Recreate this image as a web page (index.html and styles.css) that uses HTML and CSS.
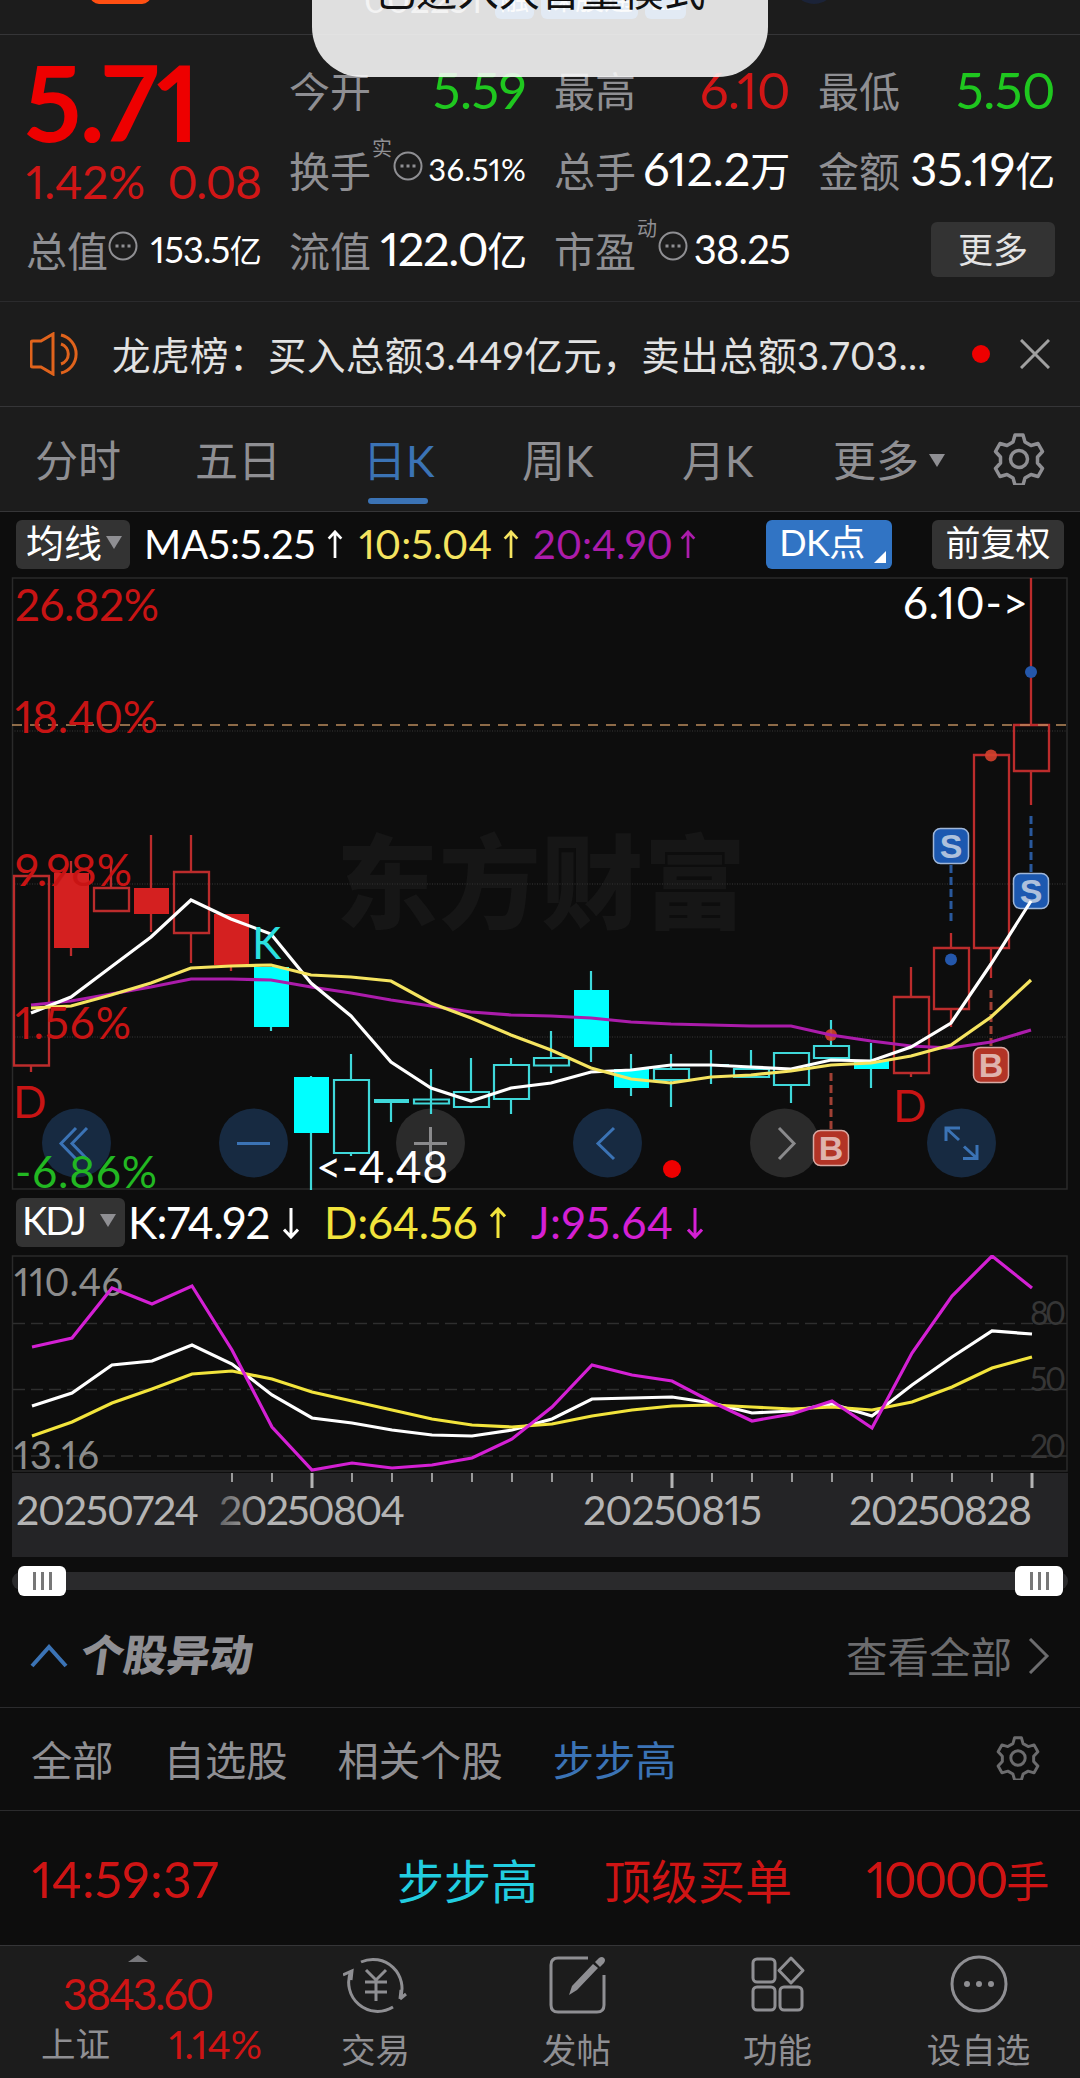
FILE: index.html
```
<!DOCTYPE html>
<html lang="zh-CN">
<head>
  <meta charset="utf-8">
  <title>步步高 002251</title>
  <link rel="stylesheet" href="styles.css">
</head>
<body>
  <svg class="symbols" width="0" height="0">
    <symbol id="gear" viewBox="0 0 52 52">
      <path d="M22 2h8l2 7 6 3.500 7-2 4.500 8-5 5.500v6l5 5.500-4.500 8-7-2-6 3.500-2 7h-8l-2-7-6-3.500-7 2-4.500-8 5-5.500v-6l-5-5.500 4.500-8 7 2 6-3.500z" stroke-linejoin="round"/>
      <circle cx="26" cy="26" r="8.500"/>
    </symbol>
    <symbol id="more-dots" viewBox="0 0 30 30">
      <circle cx="15" cy="15" r="13.500"/>
      <path d="M7.500 15h3M13.500 15h3M19.500 15h3" stroke-width="3"/>
    </symbol>
    <symbol id="up" viewBox="0 0 16 32">
      <path d="M8 31V2M1 9.500L8 2l7 7.500"/>
    </symbol>
    <symbol id="down" viewBox="0 0 16 32">
      <path d="M8 1v29M1 22.500L8 30l7-7.500"/>
    </symbol>
  </svg>

  <header class="topbar">
    <span class="topbar-logo"></span>
    <div class="stock-code">
      <span class="code">002251</span>
      <span class="tag">融</span>
      <span class="tag">深股通</span>
      <span class="tag">L2</span>
    </div>
    <span class="topbar-dot"></span>
  </header>
  <div class="toast">已进入大音量模式</div>

  <section class="quote">
    <div class="price-box">
      <div class="price">5.71</div>
      <div class="change"><span>1.42%</span><span>0.08</span></div>
    </div>
    <div class="cell"><label>今开</label><b class="green">5.59</b></div>
    <div class="cell"><label>最高</label><b class="red">6.10</b></div>
    <div class="cell"><label>最低</label><b class="green">5.50</b></div>
    <div class="cell"><label>换手<sup>实</sup></label><svg class="dots"><use href="#more-dots"/></svg><b class="xs">36.51%</b></div>
    <div class="cell"><label>总手</label><b class="md">612.2<i>万</i></b></div>
    <div class="cell"><label>金额</label><b class="md">35.19<i>亿</i></b></div>
    <div class="cell"><label>总值</label><svg class="dots"><use href="#more-dots"/></svg><b class="sm">153.5<i>亿</i></b></div>
    <div class="cell"><label>流值</label><b class="md cap">122.0<i>亿</i></b></div>
    <div class="cell"><label>市盈<sup>动</sup></label><svg class="dots"><use href="#more-dots"/></svg><b class="pe">38.25</b></div>
    <div class="cell"><button class="btn btn-more">更多</button></div>
  </section>

  <section class="news">
    <svg class="speaker" viewBox="0 0 52 44">
      <path d="M3 9h8L23 2v40L11 35H3q-2 0-2-2V11q0-2 2-2z"/>
      <path d="M31 3a19.500 19.500 0 0 1 0 38M31 12a10.500 10.500 0 0 1 0 20"/>
    </svg>
    <p>龙虎榜：买入总额3.449亿元，卖出总额3.703...</p>
    <span class="red-dot"></span>
    <svg class="close" viewBox="0 0 30 30"><path d="M1 1l28 28M29 1L1 29"/></svg>
  </section>

  <nav class="tabs">
    <a>分时</a>
    <a>五日</a>
    <a class="active">日K</a>
    <a>周K</a>
    <a>月K</a>
    <a class="tab-more">更多<i class="tri"></i></a>
    <svg class="gear"><use href="#gear"/></svg>
  </nav>

  <div class="ma-bar">
    <button class="btn btn-ma">均线<i class="tri"></i></button>
    <span class="ma5">MA5:5.25</span><svg class="arrow white"><use href="#up"/></svg>
    <span class="ma10">10:5.04</span><svg class="arrow ma10"><use href="#up"/></svg>
    <span class="ma20">20:4.90</span><svg class="arrow ma20"><use href="#up"/></svg>
    <button class="btn btn-dk">DK点</button>
    <button class="btn btn-fq">前复权</button>
  </div>

  <svg class="kline" viewBox="0 577 1080 613">
    <text class="watermark" x="336" y="921" textLength="410">东方财富</text>
    <path class="frame" d="M12.500 578H1067V1189H12.500z"/>
    <path class="grid" d="M12 731H1067M12 884H1067M12 1037H1067"/>

    <!-- 控制按钮 -->
    <g class="ctrl blue">
      <circle cx="76.500" cy="1143" r="34.500"/>
      <circle cx="253.500" cy="1143" r="34.500"/>
      <circle cx="607.500" cy="1143" r="34.500"/>
      <circle cx="961.500" cy="1143" r="34.500"/>
      <path d="M76 1128L61 1143.500L76 1159M87 1128L72 1143.500L87 1159M237 1143.500H270M614 1128L598 1143.500L614 1159"/>
      <path d="M946 1141V1128H960M947 1129L959 1140M963 1158.500H977V1145M976 1157.500L964 1146.500"/>
    </g>
    <g class="ctrl gray">
      <circle cx="430.500" cy="1143" r="34.500"/>
      <circle cx="784.500" cy="1143" r="34.500"/>
      <path d="M414 1143.500H447M430.500 1127V1160M779 1128L794 1143.500L779 1159"/>
    </g>

    <!-- 阳线 -->
    <path class="rise" d="M14 876H49V1065.500H14zM31 1065V1072
      M94 888H129V911H94zM111 865V888
      M174 872H209V933H174zM191 835V872M191 933V963
      M894 997H929V1073H894zM911 967V997M911 1073V1077
      M934 948H969V1009H934zM951 933V948M951 1009V1027
      M974 755H1009V948H974zM991 948V978
      M1014 725H1049V771H1014zM1031 578V725M1031 771V805
      M71 861V956M151 835V932M231 914V971"/>
    <path class="rise-fill" d="M54 873H89V948H54zM134 888H169V914H134zM214 914H249V965H214z"/>

    <!-- 阴线 -->
    <path class="fall" d="M334 1080H369V1153H334zM351 1054V1080M351 1153V1156
      M374 1100H409M374 1102H409M391 1102V1122
      M414 1099.500H449V1103.500H414zM431 1069V1114
      M454 1092H489V1107H454zM471 1058V1092
      M494 1065H529V1099H494zM511 1058V1065M511 1099V1114
      M534 1058H569V1065.500H534zM551 1031V1058M551 1065V1073
      M654 1069H689V1080H654zM671 1054V1069M671 1080V1107
      M694 1065H729M711 1050V1084
      M734 1069H769V1077H734zM751 1050V1069
      M774 1053H809V1085H774zM791 1085V1103
      M814 1046H849V1058H814zM831 1020V1046
      M271 1027V1031M311 1076V1190M591 971V1062M631 1054V1096M871 1043V1088"/>
    <path class="fall-fill" d="M254 967H289V1027H254zM294 1077H329V1133H294zM574 990H609V1047H574zM614 1069H649V1088H614zM854 1061H889V1069H854z"/>

    <path class="now-line" d="M12 725H1067"/>

    <!-- 买卖点 -->
    <g class="sell">
      <path d="M951 865V922M1031 816V873"/>
      <circle cx="1031" cy="672" r="6"/>
      <circle cx="951" cy="959.500" r="6"/>
      <rect x="933.500" y="828.500" width="35" height="35" rx="7"/>
      <text x="951" y="858">S</text>
      <rect x="1013.500" y="873.500" width="35" height="35" rx="7"/>
      <text x="1031" y="903">S</text>
    </g>
    <g class="buy">
      <path d="M991 990V1047M831 1073V1130"/>
      <circle cx="991" cy="755.500" r="6"/>
      <circle cx="831" cy="1035" r="6"/>
      <rect x="973.500" y="1047.500" width="35" height="35" rx="7"/>
      <text x="991" y="1077">B</text>
      <rect x="813.500" y="1130.500" width="35" height="35" rx="7"/>
      <text x="831" y="1160">B</text>
    </g>
    <circle class="alert" cx="672" cy="1169" r="9"/>

    <!-- 均线 MA20 MA10 MA5 -->
    <polyline class="line ma20" points="31,1005 71,1001 111,994 151,987 191,979 231,979 271,980 311,987 351,993 391,1000 431,1006 471,1012 511,1015 551,1016 591,1018 631,1022 671,1024 711,1025 751,1026 791,1026 831,1035 871,1041 911,1046 951,1048 991,1042 1031,1030"/>
    <polyline class="line ma5" points="31,1013 71,997 111,967 151,937 191,900 231,919 271,934 311,983 351,1016 391,1062 431,1088 471,1101 511,1088 551,1083 591,1072 631,1070 671,1065 711,1065 751,1067 791,1069 831,1060 871,1061 911,1047 951,1023 991,964 1031,901"/>
    <polyline class="line ma10" points="31,1008 71,1006 111,995 151,983 191,968 231,966 271,965 311,975 351,977 391,981 431,1003 471,1018 511,1035 551,1050 591,1068 631,1079 671,1083 711,1077 751,1075 791,1071 831,1065 871,1063 911,1056 951,1045 991,1017 1031,980"/>

    <g class="pct">
      <text x="15" y="621" textLength="144">26.82%</text>
      <text x="15" y="733" textLength="143">18.40%</text>
      <text x="15" y="886" textLength="117">9.98%</text>
      <text x="15" y="1039" textLength="116">1.56%</text>
      <text class="neg" x="15" y="1188" textLength="142">-6.86%</text>
      <text x="13" y="1118">D</text>
      <text x="893" y="1122">D</text>
      <text class="k" x="252" y="959">K</text>
      <text class="extreme" x="903" y="619" textLength="125">6.10-&gt;</text>
      <text class="extreme" x="316" y="1183" textLength="132">&lt;-4.48</text>
    </g>
  </svg>

  <div class="kdj-bar">
    <button class="btn btn-kdj">KDJ<i class="tri"></i></button>
    <span class="kdj-k">K:74.92</span><svg class="arrow white"><use href="#down"/></svg>
    <span class="kdj-d">D:64.56</span><svg class="arrow kdj-d"><use href="#up"/></svg>
    <span class="kdj-j">J:95.64</span><svg class="arrow kdj-j"><use href="#down"/></svg>
  </div>

  <svg class="kdj" viewBox="0 1255 1080 302">
    <rect class="axis" x="12" y="1473" width="1056" height="84"/>
    <path class="frame" d="M12.500 1256H1067V1471H12.500z"/>
    <path class="kdj-grid" d="M13 1323.500H1067M13 1389.500H1067M13 1456H1067"/>
    <g class="kdj-scale">
      <text x="14" y="1296" textLength="109">110.46</text>
      <text x="14" y="1469" textLength="85">13.16</text>
      <g class="levels">
        <text x="1030" y="1325" textLength="36">80</text>
        <text x="1030" y="1391" textLength="36">50</text>
        <text x="1030" y="1458" textLength="36">20</text>
      </g>
    </g>
    <polyline class="line kdj-k" points="32,1406 72,1393 112,1365 152,1361 192,1345 232,1364 272,1395 312,1418 352,1423 392,1430 432,1435 472,1436 512,1430 552,1419 592,1399 632,1398 672,1397 712,1403 752,1413 792,1411 832,1404 872,1416 912,1385 952,1357 992,1331 1032,1334"/>
    <polyline class="line kdj-d" points="32,1436 72,1422 112,1403 152,1389 192,1374 232,1371 272,1379 312,1392 352,1401 392,1410 432,1419 472,1425 512,1427 552,1424 592,1416 632,1410 672,1406 712,1405 752,1407 792,1409 832,1407 872,1410 912,1402 952,1387 992,1368 1032,1357"/>
    <polyline class="line kdj-j" points="32,1347 72,1338 112,1288 152,1304 192,1286 232,1350 272,1427 312,1470 352,1463 392,1468 432,1465 472,1458 512,1439 552,1407 592,1365 632,1375 672,1381 712,1402 752,1421 792,1414 832,1401 872,1428 912,1353 952,1296 992,1256 1032,1288"/>
    <path class="tick" d="M232 1473v9M272 1473v9M352 1473v9M392 1473v9M432 1473v9M472 1473v9M512 1473v9M552 1473v9M592 1473v9M632 1473v9M712 1473v9M752 1473v9M792 1473v9M832 1473v9M872 1473v9M912 1473v9M952 1473v9M992 1473v9"/>
    <path class="tick major" d="M312 1473v15M672 1473v15M1032 1473v15"/>
    <defs>
      <linearGradient id="fade" gradientUnits="userSpaceOnUse" x1="215" y1="0" x2="260" y2="0">
        <stop offset="0" stop-color="#5c5c5e"/>
        <stop offset="1" stop-color="#b4b4b4"/>
      </linearGradient>
    </defs>
    <g class="dates">
      <text x="16" y="1525" textLength="183">20250724</text>
      <text x="219" y="1525" textLength="186" fill="url(#fade)">20250804</text>
      <text x="583" y="1525" textLength="179">20250815</text>
      <text x="849" y="1525" textLength="183">20250828</text>
    </g>
  </svg>

  <div class="slider">
    <span class="thumb"><i></i><i></i><i></i></span>
    <span class="thumb"><i></i><i></i><i></i></span>
  </div>

  <section class="section-head">
    <svg class="chevron" viewBox="0 0 38 24"><path d="M2 22L19 3l17 19"/></svg>
    <h2>个股异动</h2>
    <a>查看全部</a>
    <svg class="chevron-r" viewBox="0 0 22 36"><path d="M2 1l17 17L2 35"/></svg>
  </section>

  <nav class="filters">
    <a>全部</a>
    <a>自选股</a>
    <a>相关个股</a>
    <a class="active">步步高</a>
    <svg class="gear"><use href="#gear"/></svg>
  </nav>

  <div class="trade">
    <span class="time">14:59:37</span>
    <span class="name">步步高</span>
    <span class="type">顶级买单</span>
    <span class="vol">10000<i>手</i></span>
  </div>

  <footer class="bottom-nav">
    <div class="index">
      <i class="tri-up"></i>
      <div class="index-val">3843.60</div>
      <div class="index-row"><span>上证</span><span class="index-pct">1.14%</span></div>
    </div>
    <a>
      <svg viewBox="0 0 66 62"><path d="M18 9A29 29 0 0 1 57 46M57 46l6-5M57 46l1-9M50 54A29 29 0 0 1 8 18M0 22l9-4-1 9"/><path d="M23 17l10 10 10-10M22 29h22M22 39h22M33 27v21"/></svg>
      交易
    </a>
    <a>
      <svg viewBox="0 0 66 62"><path d="M44 5H14q-7 0-7 7v40q0 7 7 7h39q7 0 7-7V22"/><path class="solid" d="M25 42l3-9L49 11l5 4L33 37zM51 9l4-4q3-2 5 0t0 5l-4 4z"/></svg>
      发帖
    </a>
    <a>
      <svg viewBox="0 0 66 62"><rect x="8" y="6" width="22" height="23" rx="4"/><rect x="8" y="34" width="22" height="23" rx="4"/><rect x="35" y="34" width="22" height="23" rx="4"/><path d="M46 5l12 12.500L46 30 34 17.500z" stroke-linejoin="round"/></svg>
      功能
    </a>
    <a>
      <svg viewBox="0 0 66 62"><circle cx="33" cy="31" r="27"/><circle class="solid" cx="21" cy="31" r="3"/><circle class="solid" cx="33" cy="31" r="3"/><circle class="solid" cx="45" cy="31" r="3"/></svg>
      设自选
    </a>
  </footer>
</body>
</html>
```
FILE: styles.css
```
* {
  margin: 0;
  padding: 0;
  box-sizing: border-box;
}

body {
  width: 1080px;
  height: 2078px;
  overflow: hidden;
  background: #0d0d0d;
  color: #8f8f93;
  font-family: Lato, "Noto Sans CJK SC", sans-serif;
  font-variant-numeric: proportional-nums;
}

i, b {
  font-style: normal;
  font-weight: 400;
}

svg {
  display: block;
  flex: none;
  fill: none;
  stroke: currentColor;
  stroke-width: 3;
}

svg text {
  stroke: none;
}

.symbols {
  position: absolute;
}

/* 顶部 */
.topbar {
  height: 35px;
  display: flex;
  align-items: flex-start;
  background: #1c1c1c;
  border-bottom: 1px solid #353537;
  overflow: hidden;
}

.topbar-logo {
  width: 61px;
  height: 20px;
  margin: -16px 0 0 90px;
  border-radius: 9px;
  background: #ff4f12;
}

.stock-code {
  display: flex;
  gap: 7px;
  margin: -21px 0 0 213px;
  font-size: 35px;
  line-height: 40px;
}

.code {
  width: 124px;
  color: #bbb;
}

.tag {
  padding: 0 5px;
  border-radius: 6px;
  background: #3174c4;
  color: #fff;
  font-size: 29px;
}

.topbar-dot {
  width: 44px;
  height: 44px;
  margin: -40px 0 0 106px;
  border-radius: 50%;
  background: #1b2338;
}

.toast {
  position: absolute;
  top: -60px;
  left: 312px;
  z-index: 10;
  width: 456px;
  height: 137px;
  border-radius: 50px;
  background: rgba(251, 251, 251, 0.88);
  color: #111;
  font-size: 41.300px;
  line-height: 60px;
  padding-top: 20px;
  text-align: center;
}

/* 行情 */
.quote {
  display: grid;
  grid-template-columns: 235px 237px 236px 237px;
  grid-template-rows: repeat(3, 80px);
  column-gap: 28px;
  height: 267px;
  padding: 14px 24px 0 26px;
  background: #1c1c1c;
  border-bottom: 1px solid #2b2b2d;
}

.price-box {
  grid-row: span 2;
  color: #ee0000;
}

.price {
  height: 103px;
  font-size: 105px;
  font-weight: 700;
  line-height: 104px;
  letter-spacing: -2px;
  text-indent: -2px;
}

.change {
  display: flex;
  justify-content: space-between;
  color: #d11616;
  font-size: 46px;
  line-height: 60px;
}

.change span:last-child {
  letter-spacing: -1px;
}

.cell {
  display: flex;
  align-items: center;
  white-space: nowrap;
}

.cell label {
  position: relative;
  flex: none;
  font-size: 41px;
}

.cell sup {
  position: absolute;
  top: -3px;
  left: 83px;
  font-size: 20px;
  line-height: 24px;
}

.cell b {
  margin-left: auto;
  color: #fff;
  font-size: 51px;
  letter-spacing: -0.500px;
}

.cell .green {
  color: #1fc71f;
}

.cell .red {
  color: #d11616;
}

.cell .md {
  font-size: 47px;
  letter-spacing: -0.200px;
}

.cell .cap {
  letter-spacing: -1.300px;
}

.md i {
  font-size: 40px;
}

.cell .sm {
  font-size: 36px;
  letter-spacing: -0.700px;
}

.sm i {
  font-size: 32px;
}

.cell .xs {
  font-size: 31px;
  letter-spacing: 0.200px;
}

.cell .pe {
  font-size: 40px;
  letter-spacing: -0.800px;
}

.dots {
  width: 30px;
  height: 30px;
  margin-top: -7px;
  stroke-width: 2;
}

label:has(sup) + .dots {
  margin-left: 22px;
}

.btn {
  border: 0;
  border-radius: 6px;
  background: #333;
  color: #fff;
  font: inherit;
  white-space: nowrap;
}

.btn-more {
  width: 124px;
  height: 55px;
  margin-left: auto;
  padding-bottom: 4px;
  color: #e4e4e4;
  font-size: 35px;
}

/* 公告 */
.news {
  display: flex;
  align-items: center;
  height: 105px;
  padding: 0 30px;
  background: #1c1c1c;
  border-bottom: 1px solid #353537;
}

.speaker {
  width: 52px;
  height: 44px;
  color: #e0631c;
}

.news p {
  width: 840px;
  margin-left: 30px;
  padding-bottom: 3px;
  color: #e2e2e2;
  font-size: 38.500px;
  letter-spacing: 0.480px;
  white-space: nowrap;
}

.red-dot {
  width: 18px;
  height: 18px;
  margin-left: 20px;
  border-radius: 50%;
  background: #ee0000;
}

.close {
  width: 30px;
  height: 30px;
  margin-left: 30px;
  color: #a0a0a0;
}

/* 周期 */
.tabs {
  display: flex;
  align-items: center;
  height: 105px;
  padding: 3px 0 0 35px;
  background: #1c1c1c;
  border-bottom: 1px solid #353537;
  font-size: 43px;
  line-height: 74px;
}

.tabs a {
  position: relative;
  width: 160px;
}

.tabs a:nth-child(3) {
  margin-left: 8px;
  width: 159px;
}

.tabs .tab-more {
  display: flex;
  align-items: center;
  width: 160px;
  margin-left: -9px;
}

.tabs .active {
  color: #3b73b5;
}

.tabs .active::after {
  content: "";
  position: absolute;
  left: 5px;
  bottom: -6px;
  width: 60px;
  height: 6px;
  border-radius: 3px;
  background: #3b73b5;
}

.tri {
  margin-left: 10px;
  border: 8px solid transparent;
  border-top: 13px solid #8f8f93;
  border-bottom: 0;
}

.gear {
  width: 52px;
  height: 52px;
  margin-top: -3px;
  stroke-width: 3.500;
}

/* 均线栏 */
.ma-bar {
  display: flex;
  align-items: center;
  height: 65px;
  padding: 0 16px;
  font-size: 40px;
  line-height: 46px;
  white-space: nowrap;
}

.ma-bar span {
  padding-bottom: 2px;
}

.ma-bar .btn, .kdj-bar .btn {
  height: 49px;
  flex: none;
  line-height: 45px;
  padding-bottom: 4px;
}

.btn .tri {
  margin-left: 4px;
}

.btn-ma {
  display: flex;
  align-items: center;
  width: 114px;
  padding-left: 10px;
  font-size: 38px;
}

.ma5 {
  color: #fff;
}

.ma10 {
  color: #f5e460;
}

.ma20 {
  color: #ab1cab;
}

span.ma5 {
  width: 183px;
  margin-left: 14px;
}

span.ma10, span.ma20 {
  width: 144px;
  margin-left: 16px;
}

span.ma20 {
  width: 147px;
  margin-left: 14px;
}

.arrow {
  width: 16px;
  height: 29px;
}

.white {
  color: #fff;
}

.ma-bar .btn-dk {
  position: relative;
  width: 126px;
  margin-left: auto;
  padding-right: 14px;
  background: #3174c4;
  font-size: 36px;
  letter-spacing: -0.500px;
}

.btn-dk::after {
  content: "";
  position: absolute;
  right: 6px;
  bottom: 6px;
  border: 6px solid #fff;
  border-top-color: transparent;
  border-left-color: transparent;
}

.btn-fq {
  width: 132px;
  margin-left: 40px;
  font-size: 35px;
}

/* K线图 */
.kline {
  width: 1080px;
  height: 613px;
}

.watermark {
  fill: #161616;
  font-size: 102px;
  font-weight: 900;
}

.frame {
  stroke: #2a2a2a;
  stroke-width: 1.500;
}

.grid {
  stroke: #2a2a2a;
  stroke-width: 1.500;
  stroke-dasharray: 1 1.500;
}

.now-line {
  stroke: #b98a5c;
  stroke-width: 1.500;
  stroke-dasharray: 10 8;
}

.rise {
  stroke: #bc2c2c;
  stroke-width: 2.300;
}

.rise-fill {
  fill: #d42020;
  stroke: none;
}

.fall {
  stroke: #3fd8da;
  stroke-width: 2.200;
}

.fall-fill {
  fill: #00ffff;
  stroke: none;
}

.line {
  fill: none;
  stroke-width: 3.200;
  stroke: currentColor;
}

.ctrl circle {
  stroke: none;
}

.blue circle {
  fill: #172a41;
}

.blue {
  stroke: #3b73b5;
}

.gray circle {
  fill: #2b2b2b;
}

.gray {
  stroke: #8a8a8c;
}

.sell path, .buy path {
  stroke-dasharray: 8 4;
}

.sell path {
  stroke: #29589c;
}

.sell circle {
  fill: #2457ab;
  stroke: none;
}

.sell rect {
  fill: #1c58b0;
  stroke: #9fb6d8;
  stroke-width: 1.500;
}

.buy path {
  stroke: #a04034;
}

.buy circle {
  fill: #d4412e;
  stroke: none;
  opacity: 0.9;
}

.buy rect {
  fill: #b23426;
  stroke: #d8aaa4;
  stroke-width: 1.500;
}

.sell text, .buy text {
  font-family: "Liberation Sans", sans-serif;
  font-size: 34px;
  font-weight: 700;
  text-anchor: middle;
}

.sell text {
  fill: #adc0dc;
}

.buy text {
  fill: #dfb3ad;
}

.alert {
  fill: #ee0000;
  stroke: none;
}

.pct {
  fill: #c81414;
  font-size: 44px;
}

.pct .neg {
  fill: #22b822;
}

.pct .k {
  fill: #2be0e0;
}

.pct .extreme {
  fill: #fff;
}

/* KDJ */
.kdj-bar {
  display: flex;
  align-items: center;
  height: 65px;
  padding-left: 16px;
  font-size: 44px;
  line-height: 50px;
  white-space: nowrap;
}

.kdj-bar span {
  padding-bottom: 2px;
}

.btn-kdj {
  display: flex;
  align-items: center;
  width: 109px;
  padding-left: 6px;
  font-size: 38px;
  letter-spacing: -2px;
}

.btn-kdj .tri {
  margin-left: auto;
  margin-right: 9px;
}

.kdj-bar .arrow {
  height: 32px;
}

.kdj-k {
  color: #fff;
}

.kdj-d {
  color: #f2e43c;
}

.kdj-j {
  color: #d420d4;
}

span.kdj-k {
  width: 155px;
  margin-left: 3px;
  letter-spacing: -0.700px;
}

span.kdj-d {
  width: 166px;
  margin-left: 25px;
  letter-spacing: -0.200px;
}

span.kdj-j {
  width: 156px;
  margin-left: 25px;
  letter-spacing: 0.500px;
}

.kdj {
  width: 1080px;
  height: 302px;
}

.axis {
  fill: #242426;
  stroke: none;
}

.kdj-grid {
  stroke: #2e2e2e;
  stroke-width: 1.500;
  stroke-dasharray: 12 6;
}

.kdj-scale {
  fill: #8c8c8c;
  font-size: 38px;
}

.levels {
  fill: #363636;
  font-size: 32px;
}

.tick {
  stroke: #9a9a9a;
  stroke-width: 2;
}

.major {
  stroke: #b4b4b4;
  stroke-width: 3;
}

.dates {
  fill: #b4b4b4;
  font-size: 41px;
}

/* 滑块 */
.slider {
  display: flex;
  justify-content: space-between;
  align-items: center;
  width: 1056px;
  height: 18px;
  margin: 15px 12px;
  padding: 0 5px 0 6px;
  border-radius: 9px;
  background: #2a2a2c;
}

.thumb {
  display: flex;
  justify-content: center;
  align-items: center;
  gap: 5px;
  width: 48px;
  height: 30px;
  border-radius: 6px;
  background: #fff;
}

.thumb i {
  width: 3px;
  height: 18px;
  background: #777;
}

/* 个股异动 */
.section-head {
  display: flex;
  align-items: center;
  height: 103px;
  padding: 0 30px;
  border-bottom: 1px solid #2b2b2d;
}

.chevron {
  width: 38px;
  height: 24px;
  color: #3b73b5;
  stroke-width: 4;
}

.section-head h2 {
  margin-left: 13px;
  padding-bottom: 8px;
  font-size: 43px;
  font-weight: 900;
  transform: skewX(-8deg);
}

.section-head a {
  margin-left: auto;
  padding-bottom: 3px;
  color: #6c6c6e;
  font-size: 41.500px;
}

.chevron-r {
  width: 22px;
  height: 36px;
  margin-left: 16px;
  color: #6c6c6e;
}

.filters {
  display: flex;
  align-items: center;
  gap: 50px;
  height: 103px;
  padding: 0 40px 0 31px;
  border-bottom: 1px solid #2b2b2d;
  font-size: 41.300px;
}

.filters a {
  padding-bottom: 3px;
}

.filters .active {
  color: #3b73b5;
}

.filters .gear {
  width: 44px;
  height: 44px;
  margin-left: auto;
  color: #6c6c6e;
}

.trade {
  display: flex;
  align-items: center;
  height: 134px;
  padding: 1px 33px 0 32px;
  color: #cf1414;
  font-size: 47px;
}

.time {
  width: 365px;
  font-size: 50px;
  letter-spacing: 0.300px;
}

.name {
  width: 207px;
  color: #22cde0;
}

.vol {
  margin-left: auto;
  font-size: 50px;
  letter-spacing: -2.300px;
}

.vol i {
  font-size: 43px;
}

/* 底部 */
.bottom-nav {
  display: grid;
  grid-template-columns: 275px repeat(4, 201px);
  height: 135px;
  background: #1c1c1c;
  border-top: 1px solid #353537;
  font-size: 34.500px;
}

.bottom-nav a {
  display: flex;
  flex-direction: column;
  align-items: center;
  padding-top: 7px;
  line-height: 70px;
}

.bottom-nav svg {
  width: 66px;
  height: 62px;
}

.solid {
  fill: #8f8f93;
  stroke: none;
}

.index {
  display: flex;
  flex-direction: column;
  align-items: center;
  padding-top: 9px;
}

.tri-up {
  border: 10px solid transparent;
  border-top: 0;
  border-bottom: 7px solid #77777b;
}

.index-val {
  margin-top: 4px;
  color: #cf1414;
  font-size: 43px;
  line-height: 56px;
  letter-spacing: -2px;
}

.index-row {
  display: flex;
  justify-content: space-between;
  width: 221px;
  margin-left: 28px;
  line-height: 44px;
}

.index-pct {
  color: #cf1414;
  font-size: 39px;
}
```
